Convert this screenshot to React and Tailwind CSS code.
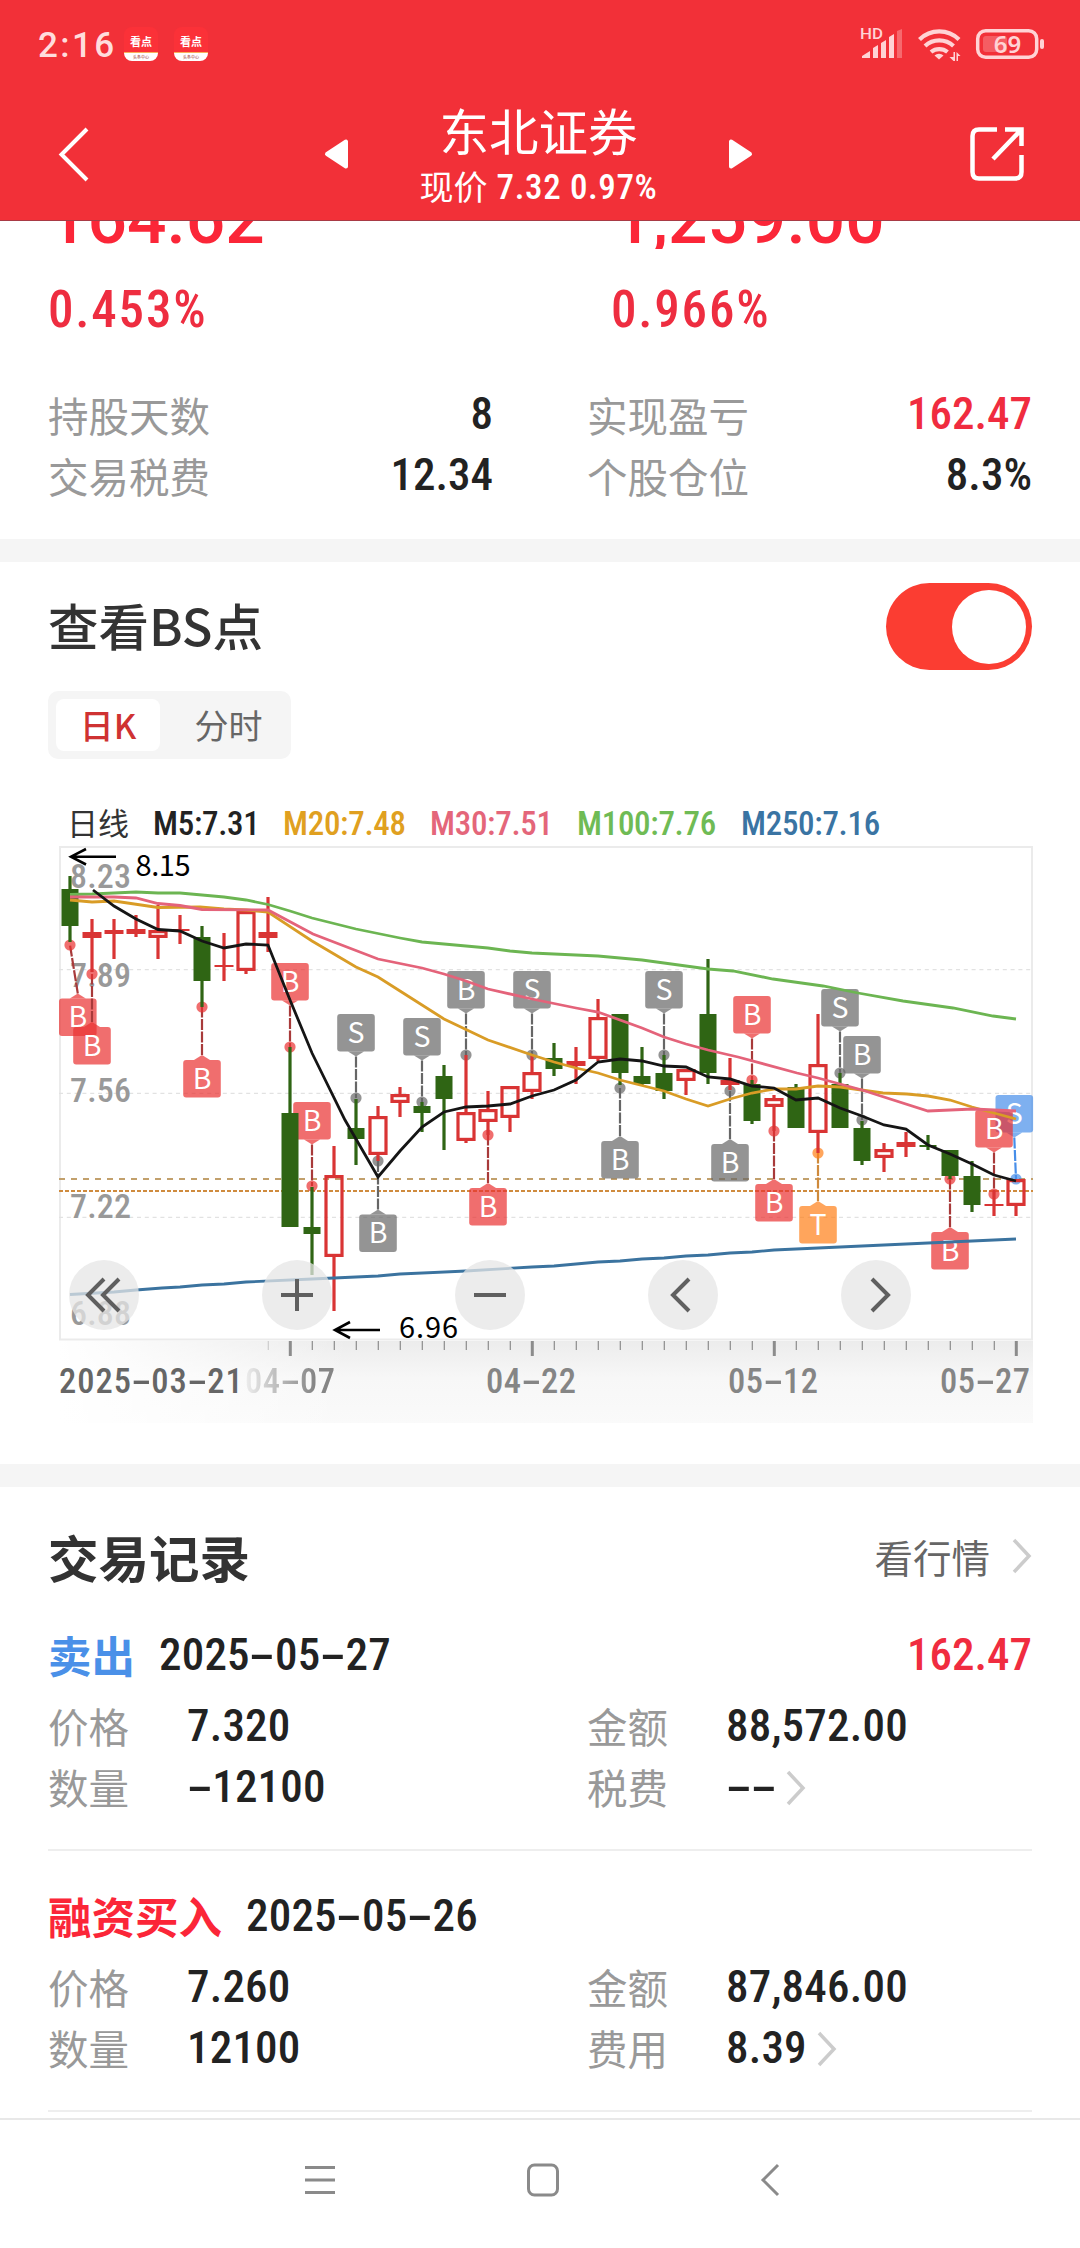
import React from 'react';

const sans = "font-['Noto_Sans_CJK_SC',sans-serif]";

// figures use a narrow grotesque; the hyphen is widened to sit on the digit grid
function Num({ children, className = '', wide }) {
  const parts = String(children).split(/(-)/);
  return (
    <span className={`shrink-0 font-['Roboto','Noto_Sans_CJK_SC',sans-serif] font-medium whitespace-nowrap leading-none ${wide ? '' : '[font-stretch:75%]'} ${className}`}>
      {parts.map((p, i) =>
        p === '-' ? (
          <span key={i} className="inline-block w-[0.56em] text-center tracking-normal"><span className="inline-block scale-x-[2]">-</span></span>
        ) : (
          p
        )
      )}
    </span>
  );
}

const CANDLES = [
  // type, high, low, open/close top, bottom
  ['g', 876, 942, 889, 926],
  ['f', 919, 972, 932, 938],
  ['f', 919, 959, 930, 934],
  ['f', 915, 937, 929, 934],
  ['r', 905, 959, 930, 938],
  ['f', 915, 944, 929, 931],
  ['g', 926, 1007, 937, 981],
  ['f', 933, 981, 965, 967],
  ['r', 911, 974, 911, 971],
  ['f', 897, 952, 932, 938],
  ['g', 1047, 1227, 1113, 1227],
  ['g', 1187, 1275, 1227, 1234],
  ['r', 1146, 1311, 1175, 1257],
  ['g', 1099, 1165, 1128, 1139],
  ['r', 1106, 1161, 1116, 1155],
  ['r', 1087, 1117, 1094, 1103],
  ['g', 1102, 1132, 1106, 1113],
  ['g', 1065, 1150, 1076, 1099],
  ['r', 1055, 1143, 1112, 1141],
  ['r', 1091, 1135, 1109, 1122],
  ['r', 1086, 1132, 1086, 1118],
  ['r', 1055, 1099, 1072, 1092],
  ['g', 1043, 1076, 1058, 1069],
  ['f', 1047, 1084, 1061, 1066],
  ['r', 999, 1061, 1017, 1059],
  ['g', 1014, 1085, 1014, 1073],
  ['g', 1047, 1086, 1076, 1084],
  ['g', 1055, 1099, 1073, 1091],
  ['r', 1069, 1095, 1069, 1081],
  ['g', 959, 1084, 1014, 1073],
  ['f', 1058, 1090, 1080, 1085],
  ['g', 1080, 1124, 1084, 1121],
  ['r', 1095, 1131, 1098, 1107],
  ['g', 1084, 1128, 1087, 1128],
  ['r', 1014, 1153, 1064, 1133],
  ['g', 1073, 1128, 1084, 1128],
  ['g', 1121, 1165, 1128, 1161],
  ['r', 1143, 1172, 1149, 1158],
  ['f', 1132, 1157, 1142, 1147],
  ['g', 1135, 1150, 1145, 1147],
  ['g', 1150, 1179, 1150, 1176],
  ['g', 1161, 1212, 1176, 1205],
  ['f', 1191, 1216, 1204, 1206],
  ['r', 1179, 1216, 1179, 1206],
];

const LINES = [
  ['#3b739f', '70,1294.5 114,1292 136,1290 162,1288 180,1287 202,1285 224,1284 246,1282 312,1279 334,1278 378,1276 400,1274 466,1271 532,1267 554,1266 598,1262 620,1261 642,1259 664,1258 686,1256 708,1255 730,1253 752,1252 774,1250 818,1248 884,1245 950,1242 1016,1239'],
  ['#6cb552', '70,894.5 92,894 136,892 158,893 180,893 224,897 246,900 268,904.5 290,911 312,918 356,929 400,938 422,942 466,946 488,948 510,951 532,953 598,956 642,960 708,969 733,971 773,979 823,986 858,993 903,1001 953,1008 993,1016 1016,1019'],
  ['#d99c26', '70,900 92,902 114,901 158,907.5 200,907 224,909 246,910 268,912 312,941 356,967 378,977 400,991 444,1019 488,1040 532,1055 554,1062 576,1068 598,1073 620,1080 664,1091 686,1099 708,1106 730,1099 752,1093 774,1089 796,1089 818,1086 840,1087 883,1093 907,1094 928,1096 950,1100 972,1107 1016,1119'],
  ['#e4637a', '70,897 114,897 136,898 158,903.5 180,905.5 202,909.5 268,910 313,934 378,959 422,968 444,974 466,981 488,989 532,999 576,1008 598,1012 642,1028 664,1037 686,1044 708,1050 738,1057 797,1073 818,1078 862,1090 928,1111 973,1109 1016,1111'],
  ['#151515', '93,890 114,906 136,919 158,929.5 180,931 202,941 224,948 246,944 268,945 290,1000 312,1053 345,1120 378,1177 400,1151 422,1127 444,1112 466,1107 488,1106 510,1104 532,1096 554,1090 576,1080 598,1062 620,1059 642,1061 664,1066 686,1067 708,1077 730,1079 752,1086 774,1088 796,1100 818,1098 840,1108 862,1116 884,1125 906,1129 928,1145 950,1154 972,1164 994,1175 1016,1181'],
];

const TONES = {
  red: { fill: '#e93030', line: '#a83a3a' },
  gray: { fill: '#666666', line: '#666666' },
  orange: { fill: '#ff7f17', line: '#cf8a3c' },
  blue: { fill: '#478ee9', line: '#478ee9' },
};

// bar x, dot y, box top, letter, tone, box x when shifted
const MARKS = [
  [70, 945, 998.5, 'B', 'red', 77.8],
  [92, 974, 1027, 'B', 'red'],
  [202, 1007, 1060, 'B', 'red'],
  [290, 1047, 963, 'B', 'red'],
  [312, 1186, 1102, 'B', 'red'],
  [356, 1098, 1014, 'S', 'gray'],
  [378, 1161, 1214.5, 'B', 'gray'],
  [422, 1102, 1018, 'S', 'gray'],
  [466, 1055, 971, 'B', 'gray'],
  [488, 1135, 1188, 'B', 'red'],
  [532, 1055, 971, 'S', 'gray'],
  [620, 1088, 1141, 'B', 'gray'],
  [664, 1055, 971, 'S', 'gray'],
  [730, 1091, 1144, 'B', 'gray'],
  [752, 1080, 996, 'B', 'red'],
  [774, 1131, 1184, 'B', 'red'],
  [818, 1153, 1206, 'T', 'orange'],
  [840, 1073, 989, 'S', 'gray'],
  [862, 1120, 1036, 'B', 'gray'],
  [950, 1179, 1232, 'B', 'red'],
  [1016, 1179, 1095, 'S', 'blue', 1014.3],
  [994, 1194, 1110, 'B', 'red'],
];

function Mark({ x, dot, top, letter, tone, boxX }) {
  const bx = boxX ?? x;
  const below = top > dot;
  const edge = below ? top : top + 37.5;
  const tip = below ? edge - 5 : edge + 5;
  const { fill, line } = TONES[tone];
  return (
    <g>
      <line x1={bx} y1={tip} x2={x} y2={dot} stroke={line} strokeWidth="2.2" strokeDasharray="11 1.5" />
      <circle cx={x} cy={dot} r="5.6" fill={fill} opacity="0.7" />
      <path
        d={`M${bx - 8} ${edge}L${bx} ${tip}L${bx + 8} ${edge}Z`}
        fill={fill}
        opacity="0.7"
      />
      <rect x={bx - 18.8} y={top} width="37.6" height="37.5" rx="3" fill={fill} opacity="0.7" />
      <text x={bx} y={top + 28.7} textAnchor="middle" fontSize="28.5" fill="#fff" className="font-['Noto_Sans_CJK_SC',sans-serif]">
        {letter}
      </text>
    </g>
  );
}

function Candle({ x, c }) {
  const [type, high, low, top, bottom] = c;
  const color = type === 'g' ? '#2f6514' : '#d93434';
  if (type === 'r') {
    return (
      <g stroke={color} strokeWidth="3.2" fill="none">
        {high < top && <line x1={x} x2={x} y1={high} y2={top} />}
        {low > bottom && <line x1={x} x2={x} y1={bottom} y2={low} />}
        <rect x={x - 8} y={top + 1.6} width="16" height={bottom - top - 3.2} />
      </g>
    );
  }
  const w = type === 'g' ? 17 : 19;
  return (
    <g fill={color}>
      <rect x={x - 1.6} y={high} width="3.2" height={low - high} />
      <rect x={x - w / 2} y={top} width={w} height={bottom - top} />
    </g>
  );
}

const Y_LABELS = [['8.23', 888], ['7.89', 987], ['7.56', 1102], ['7.22', 1218], ['6.88', 1325]];
const BUTTONS = [
  [104, 'M104 1279L88 1295L104 1311M119 1279L103 1295L119 1311'],
  [297, 'M281 1295H313M297 1279V1311'],
  [490, 'M474 1295H506'],
  [683, 'M689 1279L673 1295L689 1311'],
  [876, 'M872 1279L888 1295L872 1311'],
];

function Chart() {
  return (
    <svg viewBox="0 846 1080 495" width="1080" height="495" className="block">
      <rect x="60" y="847" width="972" height="492.5" fill="#fff" stroke="#ebebeb" strokeWidth="2" />
      <g stroke="#e2e2e2" strokeWidth="1.3" strokeDasharray="4 3.8">
        <line x1="59" x2="1032" y1="969.7" y2="969.7" />
        <line x1="59" x2="1032" y1="1093.3" y2="1093.3" />
        <line x1="59" x2="1032" y1="1217.3" y2="1217.3" />
      </g>
      <line x1="59" x2="1033" y1="1179" y2="1179" stroke="#c2a06c" strokeWidth="2" strokeDasharray="6 6" />
      <line x1="59" x2="1033" y1="1191" y2="1191" stroke="#cf8b3e" strokeWidth="2" strokeDasharray="4 2" />
      {Y_LABELS.map(([t, y]) => (
        <text key={t} x="70" y={y} fontSize="34" textLength="61" fill="#999" className="font-['Roboto',sans-serif] font-medium [font-stretch:75%]">
          {t}
        </text>
      ))}
      {MARKS.map(([x, dot, top, letter, tone, boxX]) => (
        <Mark key={x} x={x} dot={dot} top={top} letter={letter} tone={tone} boxX={boxX} />
      ))}
      {CANDLES.map((c, i) => (
        <Candle key={i} x={70 + i * 22} c={c} />
      ))}
      {LINES.map(([color, points]) => (
        <polyline key={color} points={points} fill="none" stroke={color} strokeWidth="2.8" />
      ))}
      <g stroke="#000" strokeWidth="2.6" fill="none">
        <path d="M116 856.7H71M86 849L71 856.7L86 864.5" />
        <path d="M380 1330H335M350 1322L335 1330L350 1338" />
      </g>
      <g fontSize="29" className="font-['Noto_Sans_CJK_SC',sans-serif]">
        <text x="135.5" y="876" textLength="55">8.15</text>
        <text x="399" y="1337.5" textLength="59">6.96</text>
      </g>
      {BUTTONS.map(([x, d]) => (
        <g key={x}>
          <circle cx={x} cy="1295" r="35" fill="#e6e6e6" opacity="0.75" />
          <path d={d} fill="none" stroke="#5f5f5f" strokeWidth="4" />
        </g>
      ))}
    </svg>
  );
}

function Axis() {
  const ticks = [];
  for (let i = 9; i < 44; i++) ticks.push(i);
  return (
    <div className="mr-[47px] ml-[59px] h-[82px] bg-linear-to-b from-[#ececec] via-[#f7f7f7] via-45% to-[#fafafa]">
      <div className="h-full bg-linear-to-r from-white to-transparent to-30%">
        <svg viewBox="59 1341 974 16" width="974" height="16" className="block">
          {ticks.map((i) => {
            const major = (i - 10) % 11 === 0;
            return (
              <line key={i} x1={70.3 + i * 22} x2={70.3 + i * 22} y1="1341" y2={major ? 1356 : 1350} stroke={i === 9 ? '#ccc' : '#8c8c8c'} strokeWidth={major ? 3 : 1.2} />
            );
          })}
        </svg>
        <div className="flex pt-[7px] text-[34.5px] tracking-[0.6px] text-[#858585]">
          <Num className="w-[186px] tracking-[1px] text-[#666]">2025-03-21</Num>
          <Num className="w-[241px] [mask-image:linear-gradient(to_right,rgba(0,0,0,0.1),#000_70px)]">04-07</Num>
          <Num className="w-[242px]">04-22</Num>
          <Num className="w-[212px]">05-12</Num>
          <Num>05-27</Num>
        </div>
      </div>
    </div>
  );
}

function AppBadge() {
  return (
    <div className="flex h-[34px] w-[34px] flex-col overflow-hidden rounded-[8px] bg-[#fb3138]">
      <div className="flex h-[25px] items-center justify-center pt-[4px] text-[11px] leading-none font-bold text-white">看点</div>
      <div className="h-[9px] border-t border-[#f8b05a] bg-white text-center text-[4px] leading-[8px] text-[#933]">头条中心</div>
    </div>
  );
}

function Header() {
  return (
    <header className="h-[221px] shrink-0 border-b border-[#a83a45] bg-[#f23038] text-white">
      <div className="flex h-[88px] items-center pl-[38px] text-[#ffdcdd]">
        <Num className="w-[86px] pt-[2px] text-[35px] [font-stretch:88%] font-bold tracking-[2.4px]">2:16</Num>
        <AppBadge />
        <div className="w-4" />
        <AppBadge />
        <svg viewBox="850 20 200 48" width="200" height="48" className="mr-[30px] ml-auto" fill="#ffd3d5">
          <text x="860" y="39" fontSize="15.5" textLength="23" lengthAdjust="spacingAndGlyphs" className="font-['Roboto',sans-serif] font-medium">HD</text>
          <path d="M862 58V56L870 51V58ZM873 58V48L878 45V58ZM881 58V43L886 40V58ZM889 58V37L894 34V58Z" />
          <path d="M897 58V31L902 29V58Z" opacity="0.35" />
          <g fill="none" stroke="#ffd3d5" strokeWidth="4.2">
            <path d="M919.5 39.5A28 28 0 0 1 959 39.5" />
            <path d="M925 46A21 21 0 0 1 953.5 46" />
            <path d="M931 52A13 13 0 0 1 947.5 52" />
          </g>
          <path d="M939 59.500L934.5 55.5A6.5 6.5 0 0 1 943.5 55.5Z" />
          <path d="M953.5 52H955V61H953.5L949.500 57H953.5ZM956.5 52L960.500 56H958V61H956.5Z" />
          <rect x="977.7" y="30.7" width="59" height="26.6" rx="8" fill="none" stroke="#ffd3d5" strokeWidth="3.5" />
          <rect x="983" y="36" width="24" height="16" rx="3" opacity="0.28" />
          <rect x="1040" y="39" width="4" height="10" rx="2" />
          <text x="1007.5" y="52.5" fontSize="24" textAnchor="middle" className="font-['Noto_Sans',sans-serif] font-semibold">69</text>
        </svg>
      </div>
      <div className="flex h-[132px] items-center justify-between pr-[55px] pl-[52px]">
        <svg viewBox="0 0 56 60" width="56" height="60" fill="none" stroke="#fff" strokeWidth="4">
          <path d="M35 5L9.5 30.5L35 56" />
        </svg>
        <div className="flex items-center">
          <svg viewBox="0 0 26 32" width="26" height="32" fill="#fff" stroke="#fff" strokeWidth="4" strokeLinejoin="round">
            <path d="M3 16L22 3.5V28.5Z" />
          </svg>
          <div className={`flex w-[377px] flex-col items-center ${sans}`}>
            <div className="text-[49.5px] leading-[58px]">东北证券</div>
            <div className="flex items-center pt-[5px] text-[34px] leading-[44px]">
              现价
              <Num className="pt-[3px] pl-[9px] text-[35px] tracking-[0.6px]">7.32 0.97%</Num>
            </div>
          </div>
          <svg viewBox="0 0 26 32" width="26" height="32" fill="#fff" stroke="#fff" strokeWidth="4" strokeLinejoin="round">
            <path d="M23 16L4 3.5V28.5Z" />
          </svg>
        </div>
        <svg viewBox="0 0 56 56" width="56" height="56" fill="none" stroke="#fff" strokeWidth="4.5">
          <path d="M28 3.5H10Q3.5 3.5 3.5 10V46Q3.5 52.5 10 52.5H46Q52.5 52.5 52.5 46V29" />
          <path d="M36 3.5H52.5V20M52 4L24 33" />
        </svg>
      </div>
    </header>
  );
}

function Stat({ label, value, red }) {
  return (
    <div className="flex h-[61px] w-[445px] items-center justify-between text-[40.5px] text-[#999]">
      <span>{label}</span>
      <Num className={`-mt-[4px] text-[45px] ${red ? 'text-[#f02c3f]' : 'text-[#222]'}`}>{value}</Num>
    </div>
  );
}

function Chevron() {
  return (
    <svg viewBox="0 0 20 36" width="20" height="36" fill="none" stroke="#ccc" strokeWidth="3.5">
      <path d="M2 2L17 18L2 34" />
    </svg>
  );
}

function Cell({ label, value, more }) {
  return (
    <div className="flex h-[61px] items-center text-[40.5px] text-[#999]">
      <span className="w-[139px]">{label}</span>
      <Num className="-mt-[3px] pr-[10px] text-[45px] tracking-[0.2px] text-[#222]">{value}</Num>
      {more && <Chevron />}
    </div>
  );
}

function Trade({ side, sideClass, date, profit, price, amount, qty, feeLabel, fee }) {
  return (
    <div className="h-[261px] border-b-2 border-[#eeeeee] pt-[30px]">
      <div className="mb-[4px] flex h-[72px] items-center">
        <span className={`-mt-[2px] text-[43.5px] font-bold ${sideClass}`}>{side}</span>
        <Num className="-mt-[3px] pl-[24px] text-[45px] tracking-[0.2px] text-[#222]">{date}</Num>
        {profit && <Num className="-mt-[3px] ml-auto text-[45px] text-[#f02c3f]">{profit}</Num>}
      </div>
      <div className="grid grid-cols-[539px_1fr]">
        <Cell label="价格" value={price} />
        <Cell label="金额" value={amount} />
        <Cell label="数量" value={qty} />
        <Cell label={feeLabel} value={fee} more />
      </div>
    </div>
  );
}

const LEGEND = [
  ['M5:7.31', 'w-[130px] text-[#222]'],
  ['M20:7.48', 'w-[147px] text-[#e0a020]'],
  ['M30:7.51', 'w-[147px] text-[#e4667a]'],
  ['M100:7.76', 'w-[164px] text-[#6fbb55]'],
  ['M250:7.16', 'text-[#3a74a3]'],
];

export default function App() {
  return (
    <div className={`flex h-[2248px] w-[1080px] flex-col overflow-hidden bg-white ${sans}`}>
      <Header />

      <section className="h-[318px] shrink-0 px-12">
        <div className="-mt-[36px] h-[64px] overflow-hidden [clip-path:inset(36px_0_0_0)]">
          <div className="grid grid-cols-[565px_1fr] text-[69.5px] text-[#fb2638]">
            <Num wide>164.62</Num>
            <Num wide>1,259.00</Num>
          </div>
        </div>
        <div className="grid h-[120px] grid-cols-[563px_1fr] items-center text-[51px] text-[#ee2d40]">
          <Num className="tracking-[1.8px]">0.453%</Num>
          <Num className="tracking-[1.8px]">0.966%</Num>
        </div>
        <div className="mt-[16px] grid grid-cols-[539px_1fr]">
          <Stat label="持股天数" value="8" />
          <Stat label="实现盈亏" value="162.47" red />
          <Stat label="交易税费" value="12.34" />
          <Stat label="个股仓位" value="8.3%" />
        </div>
      </section>

      <div className="h-[23px] shrink-0 bg-[#f5f5f5]" />

      <section className="h-[902px] shrink-0">
        <div className="flex h-[129px] items-center justify-between px-12">
          <h2 className="-mt-[3px] text-[50.5px] font-medium text-[#333]">查看BS点</h2>
          <div className="flex h-[87px] w-[146px] items-center justify-end rounded-full bg-[#fb3d32] pr-[6px]">
            <div className="h-[74px] w-[74px] rounded-full bg-white" />
          </div>
        </div>
        <div className="ml-12 flex h-[68px] w-[243px] items-center rounded-[10px] bg-[#f5f5f5] px-2 text-[34px] leading-none">
          <div className="flex h-[52px] w-[104px] items-center justify-center rounded-[8px] bg-white font-medium text-[#cf3232]">日K</div>
          <div className="flex-1 pl-[14px] text-center text-[#666]">分时</div>
        </div>
        <div className="flex h-[87px] items-end pb-[9px] pl-[67px]">
          <span className="w-[86px] text-[31px] leading-none text-[#333]">日线</span>
          {LEGEND.map(([t, cls]) => (
            <Num key={t} className={`-mb-[3px] text-[33px] -tracking-[0.3px] ${cls}`}>{t}</Num>
          ))}
        </div>
        <Chart />
        <Axis />
      </section>

      <div className="h-[23px] shrink-0 bg-[#f5f5f5]" />

      <section className="shrink-0 px-12">
        <div className="flex h-[103px] items-center justify-between pt-[35px]">
          <h2 className="text-[50.5px] leading-none font-bold text-[#333]">交易记录</h2>
          <div className="flex items-center gap-[22px] text-[38.5px] leading-none text-[#666]">
            看行情
            <Chevron />
          </div>
        </div>
        <Trade side="卖出" sideClass="text-[#4a90e8]" date="2025-05-27" profit="162.47" price="7.320" amount="88,572.00" qty="-12100" feeLabel="税费" fee="--" />
        <Trade side="融资买入" sideClass="text-[#fb2638]" date="2025-05-26" price="7.260" amount="87,846.00" qty="12100" feeLabel="费用" fee="8.39" />
      </section>

      <nav className="mt-auto flex h-[130px] shrink-0 items-start border-t-2 border-[#e8e8e8] bg-white">
        <svg viewBox="0 2120 1080 120" width="1080" height="120" fill="none" stroke="#8a8a8a" strokeWidth="3">
          <path d="M305 2167.5H335M305 2180H335M305 2192.5H335" />
          <rect x="528.5" y="2165" width="29" height="30" rx="6" />
          <path d="M778 2165L763 2180L778 2195" />
        </svg>
      </nav>
    </div>
  );
}
